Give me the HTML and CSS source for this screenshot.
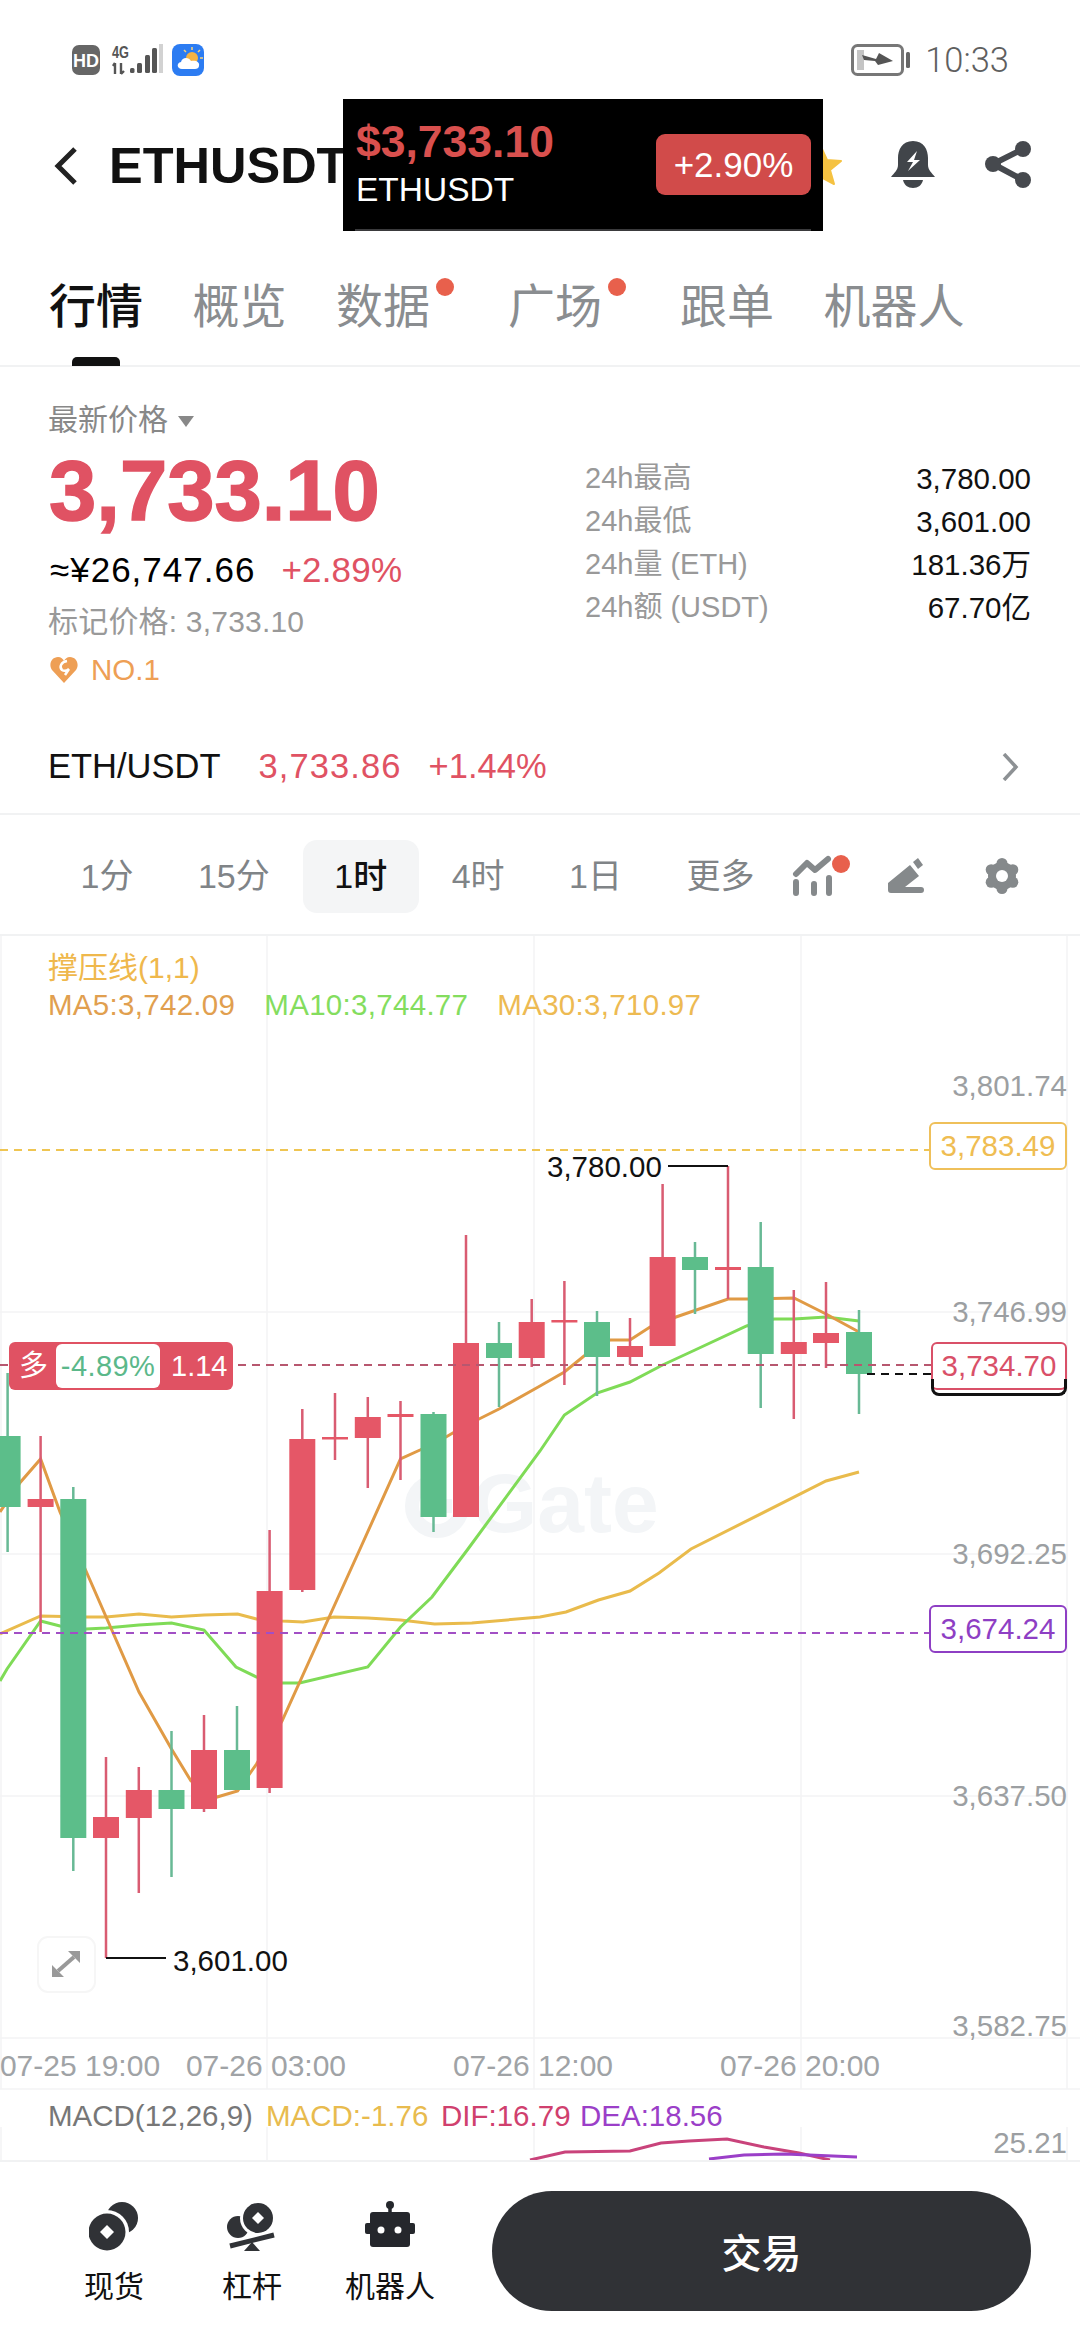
FILE: index.html
```html
<!DOCTYPE html>
<html lang="zh">
<head>
<meta charset="utf-8">
<title>ETHUSDT</title>
<link rel="stylesheet" href="styles.css">
</head>
<body>
<div class="page">
  <header class="status">
    <svg class="status-left" width="133" height="34" viewBox="0 0 133 34">
      <rect x="1" y="2" width="28" height="30" rx="7" fill="#666"/>
      <text x="15" y="23.5" class="hd">HD</text>
      <text x="41" y="15" class="net" textLength="17" lengthAdjust="spacingAndGlyphs">4G</text>
      <path d="M44 20V31M42 23L44 20M50 20V31M50 31L53 28" stroke="#555" stroke-width="2.4" fill="none"/>
      <rect x="59" y="25" width="4.5" height="5" rx="1.5" fill="#555"/>
      <rect x="66" y="20" width="5" height="10" rx="1.5" fill="#555"/>
      <rect x="74" y="12" width="5" height="18" rx="1.5" fill="#555"/>
      <rect x="81" y="5" width="5" height="25" rx="1.5" fill="#555"/>
      <rect x="88" y="1" width="4" height="29" fill="#d2d2d2"/>
      <rect x="101" y="1" width="32" height="32" rx="8" fill="#2c7cf2"/>
      <path d="M121 4V7M129 7L127 9M132 15H129M113 7L115 9" stroke="#f7d27c" stroke-width="1.5"/>
      <circle cx="121" cy="15" r="6" fill="#f5b342"/>
      <path d="M111 26C106 26 105 20 110 19C111 14 118 14 120 18C125 17 129 19 128 23C128 25 126 26 124 26Z" fill="#fff"/>
    </svg>
    <div class="status-right">
      <svg width="60" height="32" viewBox="0 0 60 32">
        <rect x="1.5" y="1.5" width="50" height="29" rx="5" fill="none" stroke="#777" stroke-width="3"/>
        <rect x="6" y="6" width="7" height="20" fill="#c4c4c4"/>
        <rect x="55" y="8" width="4" height="16" rx="1.5" fill="#666"/>
        <path d="M11 11L25 15L28 9L42 17L27 21L24 17L13 16Z" fill="#555"/>
      </svg>
      <span class="clock">10:33</span>
    </div>
  </header>

  <nav class="nav">
    <svg class="back" width="24" height="38" viewBox="0 0 24 38"><path d="M21 2L4 19L21 36" fill="none" stroke="#222" stroke-width="5"/></svg>
    <h1 class="title">ETHUSDT</h1>
    <div class="nav-icons">
      <svg class="star" width="42" height="40" viewBox="0 0 42 40"><path d="M21 1L27 14L41 15L30 24L34 38L21 31L8 38L12 24L1 15L15 14Z" fill="#f5c242" stroke="#f5c242" stroke-linejoin="round" stroke-width="2"/></svg>
      <svg class="bell" width="44" height="48" viewBox="0 0 44 48">
        <path d="M22 0C11 0 7 9 7 17V24C7 29 3 32 0 36H44C41 32 37 29 37 24V17C37 9 33 0 22 0Z" fill="#41454a"/>
        <path d="M12 39H32C31 44 27 47 22 47C17 47 13 44 12 39Z" fill="#41454a"/>
        <path d="M26 10L16 21H22L17 30L29 19H23Z" fill="#fff"/>
      </svg>
      <svg class="share" width="46" height="48" viewBox="0 0 46 48">
        <path d="M38 8L8 23L38 39" fill="none" stroke="#46494e" stroke-width="6"/>
        <circle cx="38" cy="8" r="8" fill="#46494e"/><circle cx="8" cy="23" r="8" fill="#46494e"/><circle cx="38" cy="39" r="8" fill="#46494e"/>
      </svg>
    </div>
    <div class="pip">
      <div class="pip-text">
        <div class="pip-price">$3,733.10</div>
        <div class="pip-name">ETHUSDT</div>
      </div>
      <div class="pip-badge">+2.90%</div>
    </div>
  </nav>

  <div class="tabs">
    <span class="tab tab-active">行情</span>
    <span class="tab">概览</span>
    <span class="tab tab-dot">数据</span>
    <span class="tab tab-dot">广场</span>
    <span class="tab">跟单</span>
    <span class="tab">机器人</span>
  </div>

  <section class="stats">
    <div class="stats-left">
      <div class="latest">最新价格<i class="caret"></i></div>
      <div class="big-price">3,733.10</div>
      <div class="cny"><span>≈¥26,747.66</span><span class="red cny-change">+2.89%</span></div>
      <div class="mark">标记价格: 3,733.10</div>
      <div class="rank">
        <svg width="28" height="26" viewBox="0 0 28 26"><path d="M14 26L2 13C-2 7 2 0 8 0C11 0 13 2 14 4C15 2 17 0 20 0C26 0 30 7 26 13Z" fill="#ee9f55"/><path d="M17 4C11 5 9 10 12 13C15 15 19 12 19 12M19 12L15 18" fill="none" stroke="#fff" stroke-width="2.5"/></svg>
        <span>NO.1</span>
      </div>
    </div>
    <dl class="stats-right">
      <div class="stat"><dt>24h最高</dt><dd>3,780.00</dd></div>
      <div class="stat"><dt>24h最低</dt><dd>3,601.00</dd></div>
      <div class="stat"><dt>24h量 (ETH)</dt><dd>181.36万</dd></div>
      <div class="stat"><dt>24h额 (USDT)</dt><dd>67.70亿</dd></div>
    </dl>
  </section>

  <div class="pair">
    <span class="pair-name">ETH/USDT</span>
    <span class="red pair-price">3,733.86</span>
    <span class="red pair-change">+1.44%</span>
    <svg class="pair-arrow" width="18" height="28" viewBox="0 0 18 28"><path d="M3 1L15 14L3 27" fill="none" stroke="#8d9194" stroke-width="3.5"/></svg>
  </div>

  <div class="intervals">
    <span class="iv">1分</span>
    <span class="iv">15分</span>
    <span class="iv iv-on">1时</span>
    <span class="iv">4时</span>
    <span class="iv">1日</span>
    <span class="iv">更多</span>
    <div class="iv-tools">
      <svg width="58" height="42" viewBox="0 0 58 42">
        <path d="M4 19L15 8L23 15L36 4" fill="none" stroke="#85898b" stroke-width="6" stroke-linecap="round" stroke-linejoin="round"/>
        <path d="M4 27V38M22 29V38M37 23V38" stroke="#85898b" stroke-width="6" stroke-linecap="round"/>
        <circle cx="49" cy="9" r="9" fill="#e8604c"/>
      </svg>
      <svg class="pencil" width="36" height="36" viewBox="0 0 36 36">
        <path d="M0 25L22 7L31 18L17 29H33Q36 29 36 32Q36 35 33 35H3Q0 35 0 32Z" fill="#85898b"/>
        <path d="M25 4L30 0L35 7L30 11Z" fill="#85898b"/>
      </svg>
      <svg class="gear" width="38" height="38" viewBox="-19 -19 38 38">
        <g fill="#85898b">
          <circle r="14"/><circle cy="-12.5" r="5.5"/><circle cx="10.8" cy="-6.25" r="5.5"/><circle cx="10.8" cy="6.25" r="5.5"/><circle cy="12.5" r="5.5"/><circle cx="-10.8" cy="6.25" r="5.5"/><circle cx="-10.8" cy="-6.25" r="5.5"/>
        </g>
        <circle r="6" fill="#fff"/>
      </svg>
    </div>
  </div>

  <section class="chart">
    <svg class="plot" width="1080" height="1224" viewBox="0 937 1080 1224">
      <g class="grid">
        <path d="M1 937V2090M267 937V2090M534 937V2090M801 937V2090M1067 937V2090"/>
        <path d="M0 1313H1067M0 1555H1067M0 1797H1067"/>
        <path d="M1 2128V2161M267 2128V2161M534 2128V2161M801 2128V2161M1067 2128V2161"/>
        <path d="M0 2039H1080M0 2090H1080"/>
      </g>
      <g class="wm">
        <path d="M462 1507A25 25 0 1 1 437 1482V1507H452" fill="none" stroke="#f3f5f7" stroke-width="14"/>
        <text x="472" y="1533" class="wm-text">Gate</text>
      </g>
      <polyline class="ma ma30" points="0,1635 40.6,1617 86,1618 106,1618 139,1615 171.5,1618 204,1616 237.6,1615 256.5,1620 282,1622 303,1623 334,1618 367.8,1619 400.5,1621 434.6,1625 471.8,1624 540,1618 566,1613 598.5,1601 630,1592 659,1574 691,1550 826,1482 859,1473"/>
      <polyline class="ma ma10" points="0,1682 7,1670 40.6,1622 60,1627 86,1630 106,1629 139,1626 171.5,1624 204,1631 236,1668 256.5,1678 282,1684 299.6,1684 367.8,1668 400.5,1628 432,1598 468,1550 540,1452 564.4,1416 597,1394 630,1383 662.6,1366 695,1351 746.6,1327 774,1320 794,1320 826,1318 859,1322"/>
      <polyline class="ma ma5" points="0,1513 20.6,1483 40.6,1460 60,1513 86,1572 139,1693 171.5,1750 191,1782 217,1798 237.6,1792 256.5,1765 282,1722 360,1550 400.5,1460 420,1451 446,1438 454.5,1433 479,1420 499,1410 540,1387 564.4,1373 584,1357 610,1341 630,1341 650,1328 676,1318 728,1300 748,1300 794,1299 826,1315 859,1333"/>
      <path class="wick-g" d="M7.6 1374V1553M73.3 1488V1872M171.5 1732V1878M237 1707V1751M433.5 1413V1533M499 1323V1408M597 1312V1397M695 1243V1315M760.7 1223V1409M859 1311V1415"/>
      <path class="wick-r" d="M40.6 1437V1633M106 1758V1959M138.8 1768V1894M204 1716V1813M269.6 1531V1794M302.3 1410V1593M335 1394V1461M367.8 1398V1489M400.5 1402V1481M466 1236V1344M531.7 1300V1368M564.4 1282V1386M630 1319V1366M662.6 1185V1258M728 1167V1300M793.8 1291V1420M826 1283V1369"/>
      <g class="body-g">
        <rect x="-5.4" y="1437" width="26" height="71"/><rect x="60.3" y="1500" width="26" height="339"/><rect x="158.5" y="1791" width="26" height="19"/><rect x="224" y="1751" width="26" height="40"/><rect x="420.5" y="1415" width="26" height="103"/><rect x="486" y="1344" width="26" height="15"/><rect x="584" y="1323" width="26" height="35"/><rect x="682" y="1258" width="26" height="13"/><rect x="747.7" y="1268" width="26" height="87"/><rect x="846" y="1333" width="26" height="42"/>
      </g>
      <g class="body-r">
        <rect x="27.6" y="1500" width="26" height="8"/><rect x="93" y="1818" width="26" height="21"/><rect x="125.8" y="1791" width="26" height="28"/><rect x="191" y="1751" width="26" height="59"/><rect x="256.6" y="1592" width="26" height="197"/><rect x="289.3" y="1440" width="26" height="151"/><rect x="322" y="1438" width="26" height="2.5"/><rect x="354.8" y="1418" width="26" height="21"/><rect x="387.5" y="1415" width="26" height="3"/><rect x="453" y="1344" width="26" height="174"/><rect x="518.7" y="1323" width="26" height="36"/><rect x="551.4" y="1321" width="26" height="2.5"/><rect x="617" y="1347" width="26" height="11"/><rect x="649.6" y="1258" width="26" height="89"/><rect x="715" y="1268" width="26" height="3"/><rect x="780.8" y="1343" width="26" height="12"/><rect x="813" y="1334" width="26" height="10"/>
      </g>
      <path class="dash dash-y" d="M0 1151H929"/>
      <path class="dash dash-r" d="M0 1366H931"/>
      <path class="dash dash-p" d="M0 1634H929"/>
      <path class="dash dash-k" d="M867 1375H931"/>
      <path class="leader" d="M668 1167H728M106 1959H166"/>
      <text x="547" y="1178" class="extreme">3,780.00</text>
      <text x="173" y="1972" class="extreme">3,601.00</text>
      <g class="axis">
        <text x="1067" y="1097">3,801.74</text>
        <text x="1067" y="1323">3,746.99</text>
        <text x="1067" y="1565">3,692.25</text>
        <text x="1067" y="1807">3,637.50</text>
        <text x="1067" y="2037">3,582.75</text>
        <text x="1067" y="2154">25.21</text>
      </g>
      <g class="times">
        <text x="80" y="2077">07-25 19:00</text>
        <text x="266" y="2077">07-26 03:00</text>
        <text x="533" y="2077">07-26 12:00</text>
        <text x="800" y="2077">07-26 20:00</text>
      </g>
      <g class="macd">
        <text x="48" y="2127" fill="#777">MACD(12,26,9)</text>
        <text x="266" y="2127" fill="#e8bb4e">MACD:-1.76</text>
        <text x="441" y="2127" fill="#d0406e">DIF:16.79</text>
        <text x="580" y="2127" fill="#9b3fc8">DEA:18.56</text>
      </g>
      <polyline class="ma" stroke="#c9437b" points="530,2161 565,2153 630,2152 661,2144 689,2142 727,2140 764,2148 799,2154 830,2161"/>
      <polyline class="ma" stroke="#9b3fc8" points="709,2160 744,2156 785,2155 857,2158"/>
      <rect x="38" y="1938" width="57" height="55" rx="10" fill="#fff" stroke="#f6f6f6" stroke-width="2"/>
      <path d="M68 1952H80V1964ZM52 1978V1966L64 1978Z" fill="#999"/>
      <path d="M74 1958L58 1972" stroke="#999" stroke-width="4"/>
    </svg>

    <div class="legend-a">撑压线(1,1)</div>
    <div class="legend-b">
      <span class="c-ma5">MA5:3,742.09</span>
      <span class="c-ma10">MA10:3,744.77</span>
      <span class="c-ma30">MA30:3,710.97</span>
    </div>

    <div class="tag tag-y">3,783.49</div>
    <div class="tag tag-r">3,734.70</div>
    <div class="tag tag-p">3,674.24</div>
    <div class="position">
      <span class="pos-side">多</span>
      <span class="pos-pct">-4.89%</span>
      <span class="pos-lev">1.14</span>
    </div>
  </section>

  <footer class="bar">
    <div class="tool">
      <svg width="50" height="52" viewBox="0 0 50 52">
        <circle cx="33" cy="18" r="16" fill="#303236"/>
        <circle cx="18" cy="32" r="22" fill="#fff"/>
        <circle cx="18" cy="32" r="18.5" fill="#303236"/>
        <path d="M18 25L25 32L18 39L11 32Z" fill="#fff"/>
      </svg>
      <span>现货</span>
    </div>
    <div class="tool">
      <svg width="50" height="52" viewBox="0 0 50 52">
        <circle cx="11" cy="27" r="11" fill="#303236"/>
        <circle cx="31" cy="18" r="18" fill="#fff"/>
        <circle cx="31" cy="18" r="15" fill="#303236"/>
        <path d="M31 12L37 18L31 24L25 18Z" fill="#fff"/>
        <path d="M3 46L47 35" stroke="#303236" stroke-width="5"/>
        <path d="M25 42L33 51H17Z" fill="#303236"/>
      </svg>
      <span>杠杆</span>
    </div>
    <div class="tool">
      <svg width="50" height="52" viewBox="0 0 50 52">
        <path d="M25 4V12" stroke="#25272c" stroke-width="3.5"/>
        <circle cx="25" cy="5" r="4" fill="#25272c"/>
        <rect x="5" y="12" width="40" height="35" rx="3" fill="#25272c"/>
        <rect x="0" y="23" width="50" height="11" rx="2" fill="#25272c"/>
        <circle cx="16" cy="30" r="3.5" fill="#fff"/><circle cx="33" cy="30" r="3.5" fill="#fff"/>
      </svg>
      <span>机器人</span>
    </div>
    <button class="trade">交易</button>
  </footer>
</div>
</body>
</html>
```

FILE: styles.css
```css
* { box-sizing: border-box; }
html, body { margin: 0; padding: 0; background: #fff; }
body { font-family: "Liberation Sans", "Noto Sans CJK SC", sans-serif; color: #000; }
.page { width: 1080px; height: 2340px; overflow: hidden; display: flex; flex-direction: column; }
.red { color: #e05263; }

/* status bar */
.status { height: 90px; padding: 30px 71px 0 71px; display: flex; justify-content: space-between; align-items: center; flex: none; }
.status-left { display: block; }
.hd { font: bold 18px "Liberation Sans", sans-serif; fill: #fff; text-anchor: middle; }
.net { font: bold 16px "Liberation Sans", sans-serif; fill: #555; }
.status-right { display: flex; align-items: center; gap: 14px; }
.clock { font: 300 34.5px/40px Roboto, sans-serif; color: #5f5f5f; }

/* nav */
.nav { position: relative; height: 160px; flex: none; display: flex; align-items: center; padding: 0 49px 8px 54px; }
.back { flex: none; }
.title { margin: 0 0 0 31px; font-size: 50.5px; line-height: 60px; font-weight: 700; color: #111; white-space: nowrap; }
.nav-icons { margin-left: auto; display: flex; align-items: center; gap: 48px; }
.bell { margin: -2px 0 0 1px; }
.share { margin: -2px 0 0 2px; }
.pip { position: absolute; left: 343px; top: 9px; width: 480px; height: 132px; background: #000; display: flex; justify-content: space-between; align-items: flex-start; padding: 18px 12px 0 13px; }
.pip::after { content: ""; position: absolute; left: 12px; right: 12px; bottom: 0; height: 2px; background: #3a3a3c; }
.pip-price { font-size: 44.5px; line-height: 50px; font-weight: 700; color: #d9504e; }
.pip-name { font-size: 33.5px; line-height: 46px; color: #fff; }
.pip-badge { width: 155px; height: 61px; margin-top: 17px; border-radius: 9px; background: #d14b4a; color: #fff; font-size: 35px; line-height: 61px; text-align: center; }

/* tabs */
.tabs { position: relative; height: 117px; flex: none; padding: 27px 0 0 49px; display: flex; gap: 49.5px; border-bottom: 2px solid #f1f2f3; }
.tab { position: relative; font-size: 47px; line-height: 60px; color: #8a8d90; white-space: nowrap; }
.tab-active { color: #111; font-weight: 500; }
.tab-active::after { content: ""; position: absolute; left: 23px; top: 80px; width: 48px; height: 9px; border-radius: 5px 5px 0 0; background: #111; }
.tab-dot { padding-right: 28.5px; }
.tab-dot::after { content: ""; position: absolute; right: 5px; top: 1px; width: 18px; height: 18px; border-radius: 50%; background: #e8604c; }

/* stats */
.stats { height: 353px; flex: none; padding: 33px 49px 0 48px; display: flex; justify-content: space-between; }
.latest { display: flex; align-items: center; font-size: 30px; line-height: 40px; color: #888; }
.caret { width: 0; height: 0; margin-left: 10px; margin-top: 2px; border-left: 8px solid transparent; border-right: 8px solid transparent; border-top: 11px solid #888; }
.big-price { margin: 6px 0 0 1px; font-size: 85px; line-height: 90px; font-weight: 700; color: #e05263; -webkit-text-stroke: 1.5px #e05263; }
.cny { margin: 14px 0 0 2px; display: flex; gap: 26px; font-size: 35px; line-height: 40px; letter-spacing: 1px; white-space: nowrap; }
.cny-change { letter-spacing: 0.2px; }
.mark { margin-top: 12px; font-size: 30px; line-height: 40px; letter-spacing: 0.2px; color: #999; }
.rank { margin: 8px 0 0 2px; display: flex; align-items: center; gap: 13px; font-size: 29.5px; line-height: 40px; color: #ee9f55; }
.stats-right { width: 446px; margin: 57px 0 0; padding: 0; }
.stat { display: flex; justify-content: space-between; height: 43px; line-height: 43px; font-size: 29.5px; }
.stat dt { color: #999; font-size: 29px; }
.stat dd { margin: 0; color: #111; }

/* pair */
.pair { height: 95px; flex: none; padding: 0 61px 0 48px; display: flex; align-items: center; font-size: 34.5px; border-bottom: 2px solid #f1f2f3; }
.pair-name { color: #111; }
.pair-price { margin-left: 38px; letter-spacing: 1.1px; }
.pair-change { margin-left: 27px; }
.pair-arrow { margin-left: auto; }

/* intervals */
.intervals { height: 121px; flex: none; padding: 3px 59px 0 49px; display: flex; align-items: center; gap: 1.5px; font-size: 34px; color: #808487; border-bottom: 2px solid #f1f2f3; }
.iv { height: 73px; padding: 0 31.5px; line-height: 73px; border-radius: 14px; white-space: nowrap; }
.iv-on { background: #f4f5f6; color: #111; font-weight: 500; }
.iv-tools { margin-left: auto; display: flex; align-items: center; }
.pencil { margin-left: 38px; }
.gear { margin-left: 59px; }

/* chart */
.chart { position: relative; height: 1224px; flex: none; padding: 13px 0 0 48px; font-size: 29.5px; overflow: hidden; }
.plot { position: absolute; left: 0; top: 0; display: block; }
.legend-a { position: relative; line-height: 38px; color: #efb84c; font-size: 30px; }
.legend-b { position: relative; display: flex; gap: 29px; line-height: 36px; letter-spacing: 0.3px; white-space: nowrap; }
.c-ma5 { color: #e19f4f; }
.c-ma10 { color: #84dd5e; }
.c-ma30 { color: #edba52; }
.grid path { fill: none; stroke: #f3f4f5; stroke-width: 1.5; }
.wm-text { font: bold 84px "Liberation Sans", sans-serif; fill: #f3f5f7; }
.ma { fill: none; stroke-width: 3; }
.ma5 { stroke: #e09a45; }
.ma10 { stroke: #7fdb57; }
.ma30 { stroke: #e9bb4c; }
.wick-g { stroke: #68b995; stroke-width: 2.5; fill: none; }
.wick-r { stroke: #d95c72; stroke-width: 2.5; fill: none; }
.body-g rect { fill: #5cbe8a; }
.body-r rect { fill: #e55767; }
.dash { fill: none; stroke-width: 2; stroke-dasharray: 8 6; }
.dash-y { stroke: #efc552; }
.dash-r { stroke: #b7576f; }
.dash-p { stroke: #a24fc5; }
.dash-k { stroke: #111; }
.leader { fill: none; stroke: #111; stroke-width: 2; }
.extreme { font: 29.5px "Liberation Sans", sans-serif; fill: #111; }
.axis text { font: 29.5px "Liberation Sans", sans-serif; fill: #9c9fa2; text-anchor: end; }
.times text { font: 30px "Liberation Sans", sans-serif; fill: #a0a3a6; text-anchor: middle; }
.macd text { font: 29.5px "Liberation Sans", sans-serif; }

.tag { position: absolute; left: 929px; width: 138px; height: 48px; background: #fff; border: 2px solid; border-radius: 6px; font-size: 29.5px; line-height: 44px; text-align: center; white-space: nowrap; }
.tag-y { top: 186px; color: #efbd52; border-color: #efc05a; }
.tag-r { top: 406px; left: 931px; width: 136px; color: #d95068; border-color: #d95068; }
.tag-r::after { content: ""; position: absolute; left: -2px; right: -2px; bottom: -8px; height: 14px; border: 3px solid #111; border-top: 0; border-radius: 0 0 8px 8px; }
.tag-p { top: 669px; color: #8e3fc4; border-color: #8e3fc4; }
.position { position: absolute; left: 9px; top: 406px; width: 224px; height: 48px; border-radius: 6px; background: #e05263; display: flex; align-items: center; padding: 2px; color: #fff; font-size: 29px; line-height: 44px; }
.pos-side { width: 45px; text-align: center; }
.pos-pct { width: 104px; height: 44px; border-radius: 6px; background: #fff; color: #5bb88a; text-align: center; letter-spacing: 0.4px; }
.pos-lev { margin-left: 11px; }

/* bottom bar */
.bar { height: 179px; flex: none; padding: 29px 49px 0 45px; display: flex; align-items: flex-start; background: #fff; border-top: 2px solid #f1f2f3; position: relative; }
.tool { width: 138px; margin-top: 9px; display: flex; flex-direction: column; align-items: center; gap: 15px; font-size: 30px; line-height: 40px; color: #111; }
.tool svg { display: block; }
.trade { width: 539px; height: 120px; margin-left: 33px; border: 0; border-radius: 60px; background: #303236; color: #fff; font: 500 40px "Liberation Sans", "Noto Sans CJK SC", sans-serif; }
```
